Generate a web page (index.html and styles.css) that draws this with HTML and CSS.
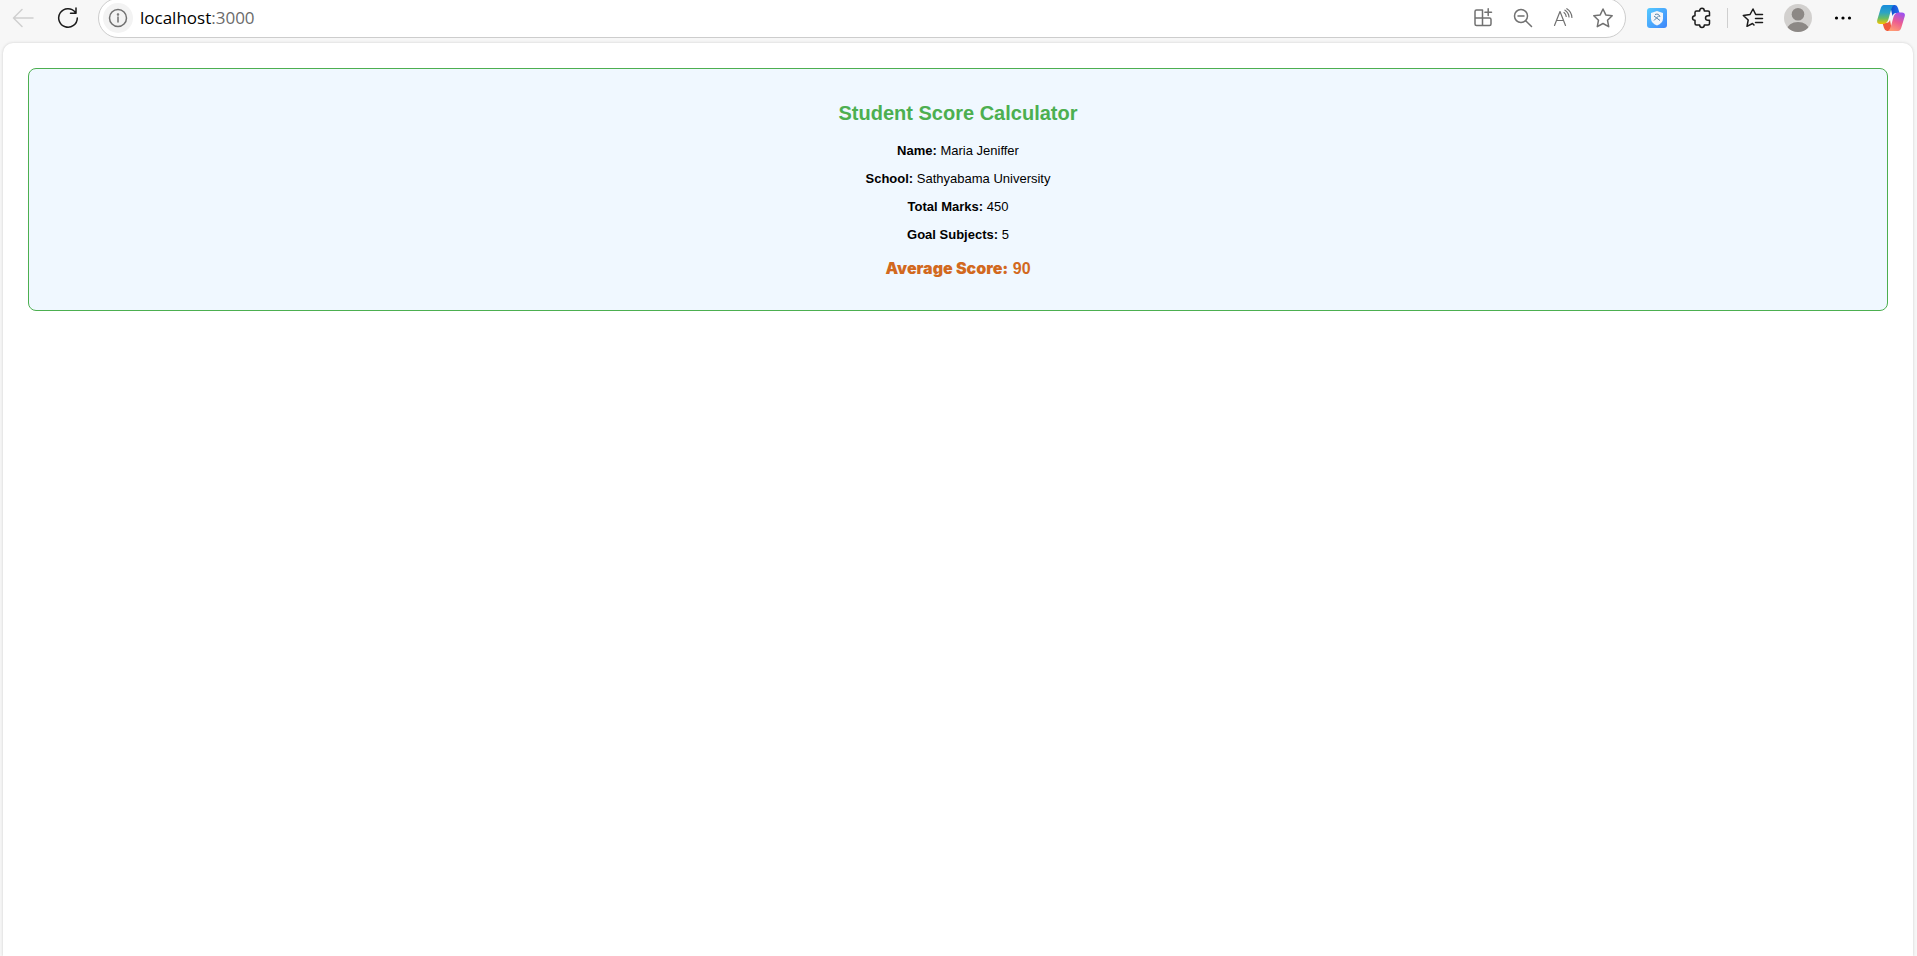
FILE: index.html
```html
<!DOCTYPE html>
<html lang="en">
<head>
<meta charset="utf-8">
<title>Student Score Calculator</title>
<link rel="stylesheet" href="styles.css">
</head>
<body>
<header class="toolbar">
  <div class="group">
    <button class="tool" aria-label="Back" disabled><svg width="22" height="22" viewBox="0 0 22 22" class="line pale"><path d="M21 11H1.500M10 2.500L1.500 11L10 19.500"/></svg></button>
    <button class="tool" aria-label="Refresh"><svg width="22" height="22" viewBox="0 0 22 22" class="line dark"><path d="M20.300 11A9.300 9.300 0 1 1 18.300 5.200M19 1V6.300H13.500"/></svg></button>
  </div>
  <div class="address">
    <button class="info" aria-label="Site information"><svg width="20" height="20" viewBox="0 0 20 20" class="line grey"><circle cx="10" cy="10" r="8.500"/><path d="M10 9v5" /><circle cx="10" cy="6.500" r=".5"/></svg></button>
    <span class="url">localhost<span class="port">:3000</span></span>
    <div class="actions">
      <button class="tool" aria-label="Install app"><svg width="20" height="20" viewBox="0 0 20 20" class="line grey"><path d="M9.500 2H3.500Q2 2 2 3.500V16Q2 17.500 3.500 17.500H16.500Q18 17.500 18 16V11.500Q18 10 16.500 10H2M9.500 2V17.500M15.200 .8V7.500M11.900 4.200H18.500"/></svg></button>
      <button class="tool" aria-label="Zoom out"><svg width="20" height="20" viewBox="0 0 20 20" class="line grey"><circle cx="8" cy="8" r="6.500"/><path d="M12.700 12.700L18.500 18.500M5 8H11"/></svg></button>
      <button class="tool" aria-label="Read aloud"><svg width="20" height="20" viewBox="0 0 20 20" class="line grey thin"><path d="M1.500 17.500L7 3.500L12.500 17.500M3.500 12.500H10.500M11 4.500Q13 6 13.200 8.500M12 2.200Q15.800 4.700 16 9M13.800 .7Q18.600 3.700 18.900 9.500"/></svg></button>
      <button class="tool" aria-label="Add to favorites"><svg width="20" height="20" viewBox="0 0 20 20" class="line grey"><path d="M10 1L12.800 6.900L19.200 7.700L14.500 12.200L15.700 18.700L10 15.500L4.300 18.700L5.500 12.200L.8 7.700L7.200 6.900Z"/></svg></button>
    </div>
  </div>
  <div class="group">
    <button class="tool" aria-label="Shield extension"><svg width="20" height="20" viewBox="0 0 20 20"><defs><linearGradient id="sky" x2="1" y2="1"><stop stop-color="#55cbff"/><stop offset="1" stop-color="#3e85fa"/></linearGradient></defs><rect width="20" height="20" rx="3" fill="url(#sky)"/><path d="M10 3L16 5V10.500Q16 15 10 17.500Q4 15 4 10.500V5Z" fill="#f2f5fa"/><path d="M7 8L13 12.500M12 7.500L7 12.500M8 6.500Q12 5 13 9" fill="none" stroke="#5784aa"/></svg></button>
    <button class="tool" aria-label="Extensions"><svg width="22" height="22" viewBox="0 0 22 22" class="line dark"><path d="M5.500 4H8.700Q8.700 1.300 11 1.300Q13.300 1.300 13.300 4H17Q18.500 4 18.500 5.500V8.700H17Q14.500 8.700 14.500 11Q14.500 13.300 17 13.300H18.500V16.500Q18.500 18 17 18H13.300Q13.300 20.500 11 20.500Q8.700 20.500 8.700 18H5.500Q4 18 4 16.500V13.300Q1.500 13.300 1.500 11Q1.500 8.700 4 8.700V5.500Q4 4 5.500 4Z"/></svg></button>
  </div>
  <span class="divider"></span>
  <div class="group">
    <button class="tool" aria-label="Favorites"><svg width="22" height="22" viewBox="0 0 22 22" class="line dark"><path d="M12 18L10.500 16.500L5 19.300L6.200 13L1.300 8.500L8 7.500L11 2L13.700 7.500H20.500M13.500 11.500H20.500M13.500 15.500H20.500"/></svg></button>
    <button class="tool" aria-label="Profile"><svg width="28" height="28" viewBox="0 0 28 28"><defs><clipPath id="disc"><circle cx="14" cy="14" r="14"/></clipPath></defs><g clip-path="url(#disc)"><rect width="28" height="28" fill="#d2d0ce"/><circle cx="14" cy="10.300" r="6.300" fill="#8c8885"/><ellipse cx="14" cy="26" rx="11" ry="8" fill="#8c8885"/></g></svg></button>
    <button class="tool" aria-label="Settings and more"><svg width="18" height="18" viewBox="0 0 18 18"><circle cx="2.500" cy="9" r="1.600"/><circle cx="9" cy="9" r="1.600"/><circle cx="15.500" cy="9" r="1.600"/></svg></button>
  </div>
  <button class="tool copilot" aria-label="Copilot"><svg width="28" height="28" viewBox="0 0 28 28"><defs>
    <linearGradient id="cool" x2="0" y2="1"><stop stop-color="#188bdc"/><stop offset=".4" stop-color="#2ca4c4"/><stop offset=".7" stop-color="#68bc65"/><stop offset="1" stop-color="#f6c500"/></linearGradient>
    <linearGradient id="warm" x1=".7" x2=".3" y2="1"><stop stop-color="#9e50ee"/><stop offset=".5" stop-color="#ec5c91"/><stop offset="1" stop-color="#ff9b73"/></linearGradient>
    <linearGradient id="blue" x2="1"><stop stop-color="#0b4cc7"/><stop offset="1" stop-color="#246cf0"/></linearGradient></defs>
    <path d="M13 1H18Q20 1 21 4L22.500 9H19Q16.500 9 15.500 12Z" fill="url(#blue)"/>
    <path d="M15 27H10Q8 27 7 24L5.500 19H9Q12 19 13 16Z" fill="#f05b3c"/>
    <path d="M7 1H17Q15 2 14 6L11.500 15Q10.500 19 7 20H3Q-1 20 .5 15L3.500 5Q4.500 1 7 1Z" fill="url(#cool)"/>
    <path d="M21 27H11Q13 26 14 22L16.500 13Q17.500 9 21 8.500H25Q29 9 27.500 13L24.500 23Q23.500 27 21 27Z" fill="url(#warm)"/></svg></button>
</header>
<main class="page">
  <section class="card">
    <h1 class="title">Student Score Calculator</h1>
    <p class="row"><b>Name:</b> Maria Jeniffer</p>
    <p class="row"><b>School:</b> Sathyabama University</p>
    <p class="row"><b>Total Marks:</b> 450</p>
    <p class="row"><b>Goal Subjects:</b> 5</p>
    <p class="average"><b class="average-label">Average Score:</b> 90</p>
  </section>
</main>
</body>
</html>
```
FILE: styles.css
```css
* { box-sizing: border-box; }
body {
  margin: 0;
  min-height: 100vh;
  display: flex;
  flex-direction: column;
  overflow: hidden;
  background: #f7f7f7;
  color: #000;
  font-family: "Liberation Sans", Arial, sans-serif;
}
.toolbar {
  display: flex;
  align-items: center;
  height: 43px;
  padding: 0 6px 8px 3px;
}
.group { display: flex; gap: 5px; }
.tool, .info {
  display: flex;
  align-items: center;
  justify-content: center;
  width: 40px;
  height: 30px;
  padding: 0;
  border: 0;
  background: none;
}
.line { fill: none; stroke-width: 1.5; stroke-linecap: round; stroke-linejoin: round; }
.thin { stroke-width: 1.2; }
.pale { stroke: #cfcfcf; }
.dark { stroke: #1b1b1b; }
.grey { stroke: #717171; }
.address {
  flex: 1;
  display: flex;
  align-items: center;
  height: 40px;
  margin: 0 11px 0 10px;
  padding: 0 2px 0 4px;
  border: 1px solid #cdcdcd;
  border-radius: 20px;
  background: #fff;
}
.info { width: 30px; border-radius: 50%; background: #f3f3f3; }
.url {
  flex: 1;
  margin-left: 7px;
  font: 17px/24px "Open Sans", "Noto Sans", sans-serif;
}
.port { color: #6b6b6b; }
.actions { display: flex; }
.divider { width: 1px; height: 20px; margin: 0 5px; background: #cfcfcf; }
.copilot { margin-left: 8px; }
.page {
  flex: 1;
  margin: 0 4px 0 3px;
  padding: 25px;
  border-radius: 10px 10px 0 0;
  background: #fff;
  box-shadow: 0 0 3px #cccccc;
}
.card {
  padding: 32px 18px 31px;
  border: 1px solid #4caf50;
  border-radius: 8px;
  background: #f0f8ff;
  text-align: center;
}
.title {
  margin: 0 0 18px;
  color: #4caf50;
  font-size: 20px;
  line-height: 24px;
}
.row { margin: 0 0 12px; font-size: 13px; line-height: 16px; }
.average {
  margin: 15px 0 0;
  color: #d2691e;
  font-size: 16px;
  font-weight: bold;
  line-height: 20px;
}
.average-label { font-family: Inter, "Liberation Sans", sans-serif; font-weight: 900; }
```
